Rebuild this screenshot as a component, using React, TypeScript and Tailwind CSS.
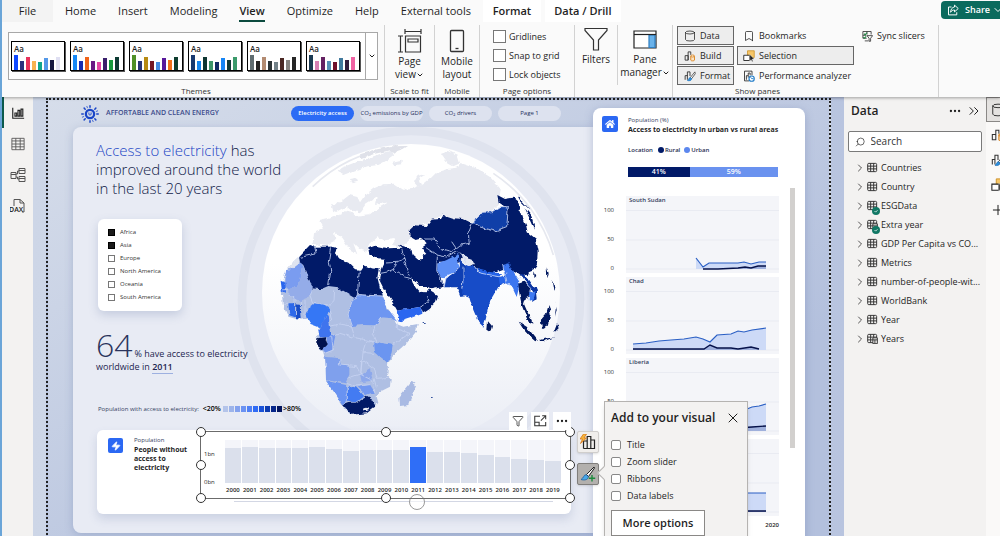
import type { ReactNode } from "react";
import {
  Bookmark,
  ChevronDown,
  ChevronRight,
  ChevronsRight,
  Cylinder,
  Ellipsis,
  Filter,
  Plus,
  Search,
  X,
  Zap,
} from "lucide-react";
import { FaHome } from "react-icons/fa";

const themes = [
  ["#1149ff", "#2b2f7d", "#e8315b", "#f7b250", "#10a58c", "#5498e8", "#12143f", "#dfdff2"],
  ["#1788f5", "#1a2bb0", "#f0641a", "#6a1a85", "#e645a5", "#3a1f6b", "#159a3c", "#0d3b33"],
  ["#4f8f26", "#273576", "#b68a12", "#741722", "#448be0", "#57189b", "#f0701a", "#0e3d2f"],
  ["#17386f", "#1787f0", "#0f3632", "#3c9469", "#112a63", "#1685f5", "#123a37", "#3b9a6b"],
  ["#5f6c70", "#232323", "#b38b71", "#2c3436", "#738289", "#4a2722", "#86827e", "#262626"],
  ["#1b3a52", "#d680b4", "#642162", "#5691b8", "#6e0f2b", "#41799d", "#331d3c", "#f062a3"],
];
const themeHeights = [15, 9, 13, 9, 8, 12, 10, 13];

const tabs = ["Home", "Insert", "Modeling", "View", "Optimize", "Help", "External tools"];

const continents = [
  { name: "Africa", checked: true },
  { name: "Asia", checked: true },
  { name: "Europe", checked: false },
  { name: "North America", checked: false },
  { name: "Oceania", checked: false },
  { name: "South America", checked: false },
];

const legendColors = ["#b4c4ea", "#9db4ea", "#84a2ee", "#6b92f2", "#4f80f5", "#2f6bf5", "#1a52d8", "#0d3bb0", "#06268a", "#021560"];

const withoutElectricity = [35, 36, 35, 35, 35, 36, 34, 32, 33, 33, 33, 36, 31, 31, 30, 28, 26, 24, 23, 22];

const facets = [
  {
    country: "South Sudan",
    urban: "70,62 77,71 83,67 112,67 118,66 125,68 133,66 140,66",
    rural: "77,73 92,73 112,72 119,71 125,72 132,70 140,70",
  },
  {
    country: "Chad",
    urban: "7,67 20,66 33,64 45,63 58,62 70,60 77,62 84,65 91,58 105,57 112,54 118,55 126,53 140,51",
    rural: "7,72 78,72 84,68 91,71 105,71 112,72 125,70 133,72",
  },
  {
    country: "Liberia",
    urban: "84,60 98,57 112,54 121,51 126,49 133,48 140,46",
    rural: "84,72 112,70 126,69 140,68",
  },
  { country: "", urban: "84,54 140,54", rural: "84,72 140,72" },
];

const tables = [
  { name: "Countries" },
  { name: "Country" },
  { name: "ESGData", used: true },
  { name: "Extra year", used: true, calculated: true },
  { name: "GDP Per Capita vs CO..." },
  { name: "Metrics" },
  { name: "number-of-people-wit..." },
  { name: "WorldBank" },
  { name: "Year" },
  { name: "Years", calculated: true },
];

function Tick({ label, className = "", boxClass = "" }: { label: string; className?: string; boxClass?: string }) {
  return (
    <label className={`flex items-center ${className}`}>
      <input type="checkbox" className={`shrink-0 appearance-none border bg-white ${boxClass}`} />
      {label}
    </label>
  );
}

function BuildIcon({ className = "h-3.5 w-3.5" }: { className?: string }) {
  return (
    <svg viewBox="0 0 16 16" className={className} fill="none">
      <path d="M1.5 13.5v-6h4v6zM5.5 13.5v-11h3.500v4" stroke="#333" strokeWidth="1.200" />
      <path d="M9 8v5.500c0 1.300 5 1.300 5 0V8" fill="#fbe3c4" stroke="#d9821b" strokeWidth="1.200" />
      <ellipse cx="11.500" cy="8" rx="2.500" ry="1.300" fill="#fff" stroke="#d9821b" strokeWidth="1.200" />
    </svg>
  );
}

function BrushIcon({ className = "h-3.5 w-3.5" }: { className?: string }) {
  return (
    <svg viewBox="0 0 16 16" className={className} fill="none">
      <path d="M1.500 13V7.500h3V13M4.500 8V2.500H8V8" stroke="#333" strokeWidth="1.200" />
      <path d="M14.500 2.500 8.500 10l1.700 1.500L15 5z" fill="#fff" stroke="#333" />
      <path d="M8.300 10c-2 0-1.500 3-3.800 4 2.500.800 5.500.300 5.700-2.500z" fill="#2b8fdd" stroke="#1b6fb8" strokeWidth=".8" />
    </svg>
  );
}

function SelectionIcon({ className = "h-3.5 w-3.5" }: { className?: string }) {
  return (
    <svg viewBox="0 0 16 16" className={className} fill="none">
      <path d="M6 1h9v9H6z" fill="#f6c667" stroke="#c98d22" />
      <path d="M1 7h8v7H1z" fill="#fff" stroke="#222" strokeWidth="1.200" />
      <path d="m9 6 6 6-3 .3 1.500 2.700-1.300.700L10.700 13 9 15z" fill="#222" stroke="#fff" strokeWidth=".5" />
    </svg>
  );
}

function Group({ caption, className = "", children }: { caption: string; className?: string; children: ReactNode }) {
  return (
    <section className={`flex shrink-0 flex-col border-r border-[#d2d2d2] ${className}`}>
      <div className="flex flex-1">{children}</div>
      <div className="h-3 text-center text-[8px] leading-3 text-[#333]">{caption}</div>
    </section>
  );
}

function Ribbon() {
  return (
    <header className="relative z-20 bg-[#fafafa] shadow-[0_1px_3px_rgba(0,0,0,0.35)]">
      <div className="flex h-[22px] items-start">
        <button className="h-[22px] w-[51px] bg-[#f3f3f3] text-[11px]">File</button>
        <nav className="flex gap-[22px] px-3">
          {tabs.map((tab) => (
            <button
              key={tab}
              className={`h-[22px] text-[11px] ${tab === "View" ? "border-b-2 border-[#0c4a3e] pt-0.5 font-semibold" : ""}`}
            >
              {tab}
            </button>
          ))}
        </nav>
        <button className="h-[22px] w-[58px] bg-white text-[11px] font-semibold">Format</button>
        <button className="ml-1 h-[22px] w-[76px] bg-white text-[11px] font-semibold">Data / Drill</button>
        <button className="mt-px ml-auto flex h-[18px] w-[59px] items-center gap-1.5 overflow-hidden rounded-l bg-[#0b6a5d] pl-1.5 text-[9px] font-semibold text-white">
          <svg viewBox="0 0 16 16" className="h-3 w-3 shrink-0" fill="none" stroke="#fff" strokeWidth="1.300" strokeLinejoin="round">
            <path d="M6 4H2v10.500h11V11" />
            <path d="M10 1.500 15 6l-5 4.500V8C7.500 8 6 9 4.800 11 5 7 7 4.300 10 4z" />
          </svg>
          Share
          <ChevronDown className="-ml-1 h-3 w-3 shrink-0" />
        </button>
      </div>

      <div className="flex h-[75px] pt-[3px]">
        <Group caption="Themes" className="w-[383px] pl-1.5">
          <div className="mt-[7px] mr-1.5 flex h-[48px] flex-1 items-center justify-between border border-[#a8a8a8] bg-white pl-0.5">
            {themes.map((colors, index) => (
              <button key={index} className="h-[30px] w-[54px] border border-black bg-white px-0.5 shadow-[1px_1px_0_#555]">
                <div className="h-[11px] text-left text-[8px] leading-[11px] font-semibold">Aa</div>
                <div className="flex h-4 items-end gap-0.5">
                  {colors.map((color, bar) => (
                    <span key={color} className="w-1" style={{ backgroundColor: color, height: themeHeights[bar] }} />
                  ))}
                </div>
              </button>
            ))}
            <button className="flex h-full w-3 items-center justify-center border-l border-[#a8a8a8]">
              <ChevronDown className="h-2 w-2" strokeWidth={3} />
            </button>
          </div>
        </Group>

        <Group caption="Scale to fit" className="w-[50px]">
          <button className="flex flex-1 flex-col items-center pt-1 text-[10px] leading-[13px]">
            <svg viewBox="0 0 24 24" className="h-6 w-6 shrink-0" fill="none" stroke="#333" strokeWidth="1.200">
              <path d="M7 2.500h16M7 0v5M23 0v5M2.500 7v16M0 7h5M0 23h5" />
              <path d="M7.500 7h15v16h-15zM10 10h10v3H10z" />
            </svg>
            <span className="mt-0.5">Page</span>
            <span className="flex items-center">
              view
              <ChevronDown className="h-2 w-2" strokeWidth={3} />
            </span>
          </button>
        </Group>

        <Group caption="Mobile" className="w-[45px]">
          <button className="flex flex-1 flex-col items-center pt-1 text-[10px] leading-[13px]">
            <svg viewBox="0 0 24 24" className="h-6 w-6 shrink-0" fill="none" stroke="#333" strokeWidth="1.300">
              <rect x="5.500" y="1.500" width="13" height="21" rx="1" />
              <path d="M10.500 19.500h3" />
            </svg>
            <span className="mt-0.5">Mobile</span>
            <span>layout</span>
          </button>
        </Group>

        <Group caption="Page options" className="w-[95px]">
          <div className="flex flex-col gap-[6px] pt-[5px] pl-[13px]">
            {["Gridlines", "Snap to grid", "Lock objects"].map((label) => (
              <Tick key={label} label={label} className="gap-[3px] text-[9px] leading-[13px]" boxClass="h-[13px] w-[13px] border-[#777]" />
            ))}
          </div>
        </Group>

        <section className="flex shrink-0 border-r border-[#d2d2d2]">
          <button className="mb-3 flex w-[43px] flex-col items-center border-r border-[#d2d2d2] pt-0.5 text-[10px] leading-[13px]">
            <svg viewBox="0 0 24 24" className="h-6 w-6" fill="none" stroke="#333" strokeWidth="1.200">
              <path d="M1 1.500h22v2L14.500 13v10h-5V13L1 3.500z" />
            </svg>
            <span className="mt-0.5">Filters</span>
          </button>
          <button className="flex w-[54px] flex-col items-center pt-0.5 text-[10px] leading-[13px]">
            <svg viewBox="0 0 24 24" className="h-6 w-6 shrink-0" fill="none" stroke="#222" strokeWidth="1.200">
              <path d="M1 4h22v17H1z" fill="#fff" />
              <path d="M16 8h6v12.500h-6z" fill="#69b2ea" stroke="#2e7fc2" />
              <path d="M1 7.500h22" />
            </svg>
            <span className="mt-0.5">Pane</span>
            <span className="flex items-center">
              manager
              <ChevronDown className="h-2 w-2" strokeWidth={3} />
            </span>
          </button>
        </section>

        <section className="flex w-[266px] shrink-0 flex-col border-r border-[#d2d2d2] text-[9px]">
          <div className="flex flex-1 items-start gap-[3px] pt-px pl-1">
            <div className="flex w-[57px] flex-col gap-px">
              <button className="flex h-[19px] items-center gap-1 border border-[#666] bg-[#ededed] pl-1.5">
                <Cylinder className="h-3 w-3" strokeWidth={1.5} /> Data
              </button>
              <button className="flex h-[19px] items-center gap-1 border border-[#666] bg-[#ededed] pl-1.5">
                <BuildIcon className="h-3 w-3" /> Build
              </button>
              <button className="flex h-[19px] items-center gap-1 border border-[#666] bg-[#ededed] pl-1.5">
                <BrushIcon className="h-3 w-3" /> Format
              </button>
            </div>
            <div className="flex w-[117px] flex-col gap-px">
              <button className="flex h-[19px] items-center gap-1 pl-1.5">
                <Bookmark className="h-3 w-3" strokeWidth={1.5} /> Bookmarks
              </button>
              <button className="flex h-[19px] items-center gap-1 border border-[#666] bg-[#ededed] pl-[5px]">
                <SelectionIcon className="h-3 w-3" /> Selection
              </button>
              <button className="flex h-[19px] items-center gap-1 pl-1.5 whitespace-nowrap">
                <svg viewBox="0 0 16 16" className="h-3 w-3 shrink-0" fill="none">
                  <path d="M8 14.500H2v-13h10V7M4.500 13V7.500h2M7 10V4h2.500v3" stroke="#333" strokeWidth="1.200" />
                  <circle cx="11.500" cy="11.500" r="3.500" fill="#fff" stroke="#1f7bc8" strokeWidth="1.500" />
                  <path d="m10 9.500 1.500 2H14" stroke="#1f7bc8" strokeWidth="1.200" />
                </svg>
                Performance analyzer
              </button>
            </div>
            <button className="ml-1 flex h-[19px] items-center gap-1 whitespace-nowrap">
              <svg viewBox="0 0 16 16" className="h-3 w-3 shrink-0" fill="none" stroke="#333" strokeWidth="1.100">
                <path d="M2.500 2h11v4M2.500 2v9h5M5 14.500h5M2.500 7H7M8 2v4" />
                <path d="m4 5 1.500 1.500L8 3.500M3 9.500l1.500 1.500L7 8.500" stroke="#2a8a4a" strokeWidth="1.500" />
                <path d="M8 7.500h7.500L12.800 11v4h-2v-4z" fill="#fff" />
              </svg>
              Sync slicers
            </button>
          </div>
          <div className="h-3 pr-24 text-center text-[8px] leading-3 text-[#333]">Show panes</div>
        </section>
      </div>
    </header>
  );
}

function TableIcon({ calculated = false }: { calculated?: boolean }) {
  return (
    <svg viewBox="0 0 16 16" className="h-[11px] w-[11px] shrink-0" fill="none" stroke="#333" strokeWidth="1.400">
      <rect x="1" y="2" width="13" height="12" rx="1.500" />
      <path d="M1 6h13M1 10h13M5.300 2v12M9.700 2v12" />
      {calculated ? <path d="M8.500 7h6.500v8.500H8.500zM8.500 10H15M11.500 10v5" fill="#f3f2f1" /> : null}
    </svg>
  );
}

function ViewRail() {
  const item = "flex h-[31px] w-full items-center justify-center";
  return (
    <nav className="flex w-[31px] shrink-0 flex-col items-center bg-[#f3f2f1]">
      <button aria-label="Report view" className={`${item} border-l-2 border-[#0c5a4b] pr-0.5`}>
        <svg viewBox="0 0 16 16" className="h-3.5 w-3.5" fill="none" stroke="#222" strokeWidth="1.300">
          <path d="M2 2v12h13M4.500 11.500V8h2v3.500zM8 11.500V5h2v6.500zM11.500 11.500v-8h2v8z" />
        </svg>
      </button>
      <button aria-label="Table view" className={item}>
        <svg viewBox="0 0 16 16" className="h-3.5 w-3.5" fill="none" stroke="#555">
          <path d="M1 1.500h14v13H1zM1 4.500h14M1 8h14M1 11.200h14M5.500 1.500v13M10.500 1.500v13" />
        </svg>
      </button>
      <button aria-label="Model view" className={item}>
        <svg viewBox="0 0 16 16" className="h-4 w-4" fill="none" stroke="#555">
          <path d="M1 5.500h5v6H1zM1 7.500h5M9 1.500h6v5H9zM9 3.500h6M9 9.500h6v5H9zM9 11.500h6M6 7H7.500V4H9M6 10h1.500v2H9" />
        </svg>
      </button>
      <button aria-label="DAX query view" className={item}>
        <svg viewBox="0 0 16 16" className="h-4 w-4" fill="none" stroke="#555">
          <path d="M4 8V1.500h6L14 5v9h-2M10 1.500V5h4" />
          <text x="-1" y="14" fontSize="7" fontWeight="600" stroke="none" fill="#222">
            DAX
          </text>
        </svg>
      </button>
    </nav>
  );
}

/* Orthographic globe centred on the Indian Ocean. */
function Globe() {
  return (
    <svg viewBox="-561 96 1560 1218" className="h-[406px] w-[520px] [grid-area:1/1]" fill="none">
      <defs>
        <linearGradient id="sea" x1="0" y1="0" x2="0" y2="1">
          <stop offset="0.400" stopColor="#ffffff" />
          <stop offset="1" stopColor="#eaedf5" />
        </linearGradient>
        <filter id="coast" x="-5%" y="-5%" width="110%" height="110%" colorInterpolationFilters="sRGB">
          <feTurbulence type="fractalNoise" baseFrequency="0.045" numOctaves="3" seed="4" />
          <feDisplacementMap in="SourceGraphic" scale="14" xChannelSelector="R" yChannelSelector="G" />
        </filter>
      </defs>
      <circle cx="453" cy="615" r="507" stroke="#dfe3ee" strokeWidth="26" />
      <circle cx="453" cy="594" r="447" fill="url(#sea)" />
      <path d="M158 275A435 435 0 0 1 400 158M700 235A440 440 0 0 1 880 480" stroke="#e6e8ef" strokeWidth="5" />

      <g filter="url(#coast)">
        <g fill="#e8eaf1">
          <path d="M232 232 246 218 290 202 345 182 375 172 396 166 402 182 385 194 355 210 320 214 280 228 250 240z" />
          <path d="M300 178 345 164 395 154 444 153 430 162 412 168 404 176 392 166 345 176 304 190z" fill="#dfe1e9" />
          <path d="M270 252 288 249 294 260 275 265zM398 200 425 194 424 208 404 211z" />
          <path d="M216 330 245 318 268 300 292 306 300 322 315 300 342 280 370 268 402 266 430 284 458 282 490 268 512 250 530 232 562 222 592 218 604 205 645 218 690 246 722 282 716 330 690 352 640 382 590 372 548 360 515 378 450 405 455 430 425 455 396 450 408 432 372 436 352 424 328 446 320 470 298 462 280 445 292 478 268 462 244 428 222 410 226 438 196 452 158 446 162 412 190 400 178 378 206 372 242 358 266 346 282 350 262 334 230 352z" />
          <path d="M540 178 566 168 592 180 600 205 580 214 556 200z" />
          <path d="M268 345 300 352 318 326 350 306 345 330 382 322 352 340 330 358 286 362z" fill="#ffffff" />
          <path d="M462 262 472 244 500 236 478 250 486 270 474 276z" />
          <path d="M216 338 232 318 246 320 236 345 220 352z" />
        </g>

        <g fill="#011a68">
          <path d="M446 405 461 391 500 393 515 374 540 372 548 359 580 370 610 372 637 385 650 372 690 350 725 347 735 335 716 322 712 300 735 312 758 308 780 326 779 350 798 390 803 412 828 432 836 470 834 505 828 520 808 528 803 540 785 545 765 530 740 520 700 535 660 530 635 515 612 490 595 500 560 500 540 500 505 480 485 458 500 448 485 430 468 434 450 424z" />
          <path d="M772 302 790 320 812 348 800 335 780 316zM795 340 815 365 826 405 815 385zM780 352 792 370 786 372z" />
        </g>

        <g transform="translate(0 465)">
          <path
            fill="#011a68"
            d="M325 -5 345 -13 385 -5 425 -7 410 -18 440 -8 455 -2 458 15 478 32 488 18 510 8 540 20 540 65 552 110 515 118 500 108 480 108 465 95 452 80 458 98 468 115 480 128 497 130 506 116 514 126 534 138 528 158 508 178 490 190 482 170 440 178 412 182 395 152 372 118 357 88 362 62 372 38 372 26 345 24 328 14z"
          />
          <path
            fill="#afbfe3"
            d="M118 18 150 -15 165 -10 215 -10 232 -5 225 8 235 28 265 38 285 58 300 60 310 45 335 55 356 58 352 82 365 130 380 170 400 200 410 222 430 230 473 222 468 245 440 280 405 310 385 335 382 375 392 385 390 410 360 425 350 440 355 458 345 470 320 490 270 492 250 470 225 430 200 395 197 340 190 310 175 290 172 265 180 250 172 225 150 205 120 210 85 200 68 160 65 120 75 70 100 35z"
          />
          <path
            fill="#011a68"
            d="M118 18 150 -15 165 -10 215 -10 232 -5 225 8 235 28 265 38 285 58 300 60 310 45 335 55 356 58 352 82 365 138 295 133 288 145 250 122 235 112 205 108 182 118 158 115 130 45 118 36z"
          />
          <path fill="#dfe4f0" d="M80 56 100 36 116 20 120 38 96 58z" />
          <path fill="#7a9cf0" d="M72 105 78 60 96 58 122 38 128 46 112 110 85 118z" />
          <path fill="#94ace9" d="M128 46 158 114 150 138 120 150 85 135 85 118 112 110z" />
          <path fill="#2a66ee" d="M62 92 76 98 78 128 66 124z" />
          <path fill="#6e96f1" d="M292 134 366 138 382 172 365 200 348 226 310 225 275 228 264 200 275 160zM366 172 388 182 412 212 398 205 364 202z" />
          <path fill="#3577f5" d="M150 163 190 165 208 178 200 200 178 232 152 222 138 200z" />
          <path fill="#3f74ee" d="M205 195 210 230 215 262 178 262 175 238 188 215z" />
          <path fill="#2d69ea" d="M85 160 105 160 105 202 88 196z" />
          <path fill="#184cc6" d="M109 163 122 165 125 208 108 208z" />
          <path fill="#7095ee" d="M200 262 226 258 216 300 196 308 188 298 202 285z" />
          <path fill="#01124f" d="M172 265 195 262 203 284 188 298 172 288z" />
          <path fill="#7fa0ed" d="M196 320 238 325 243 345 268 352 268 374 256 400 198 390z" />
          <path fill="#6993f2" d="M198 392 258 406 262 455 250 466 225 430z" />
          <path fill="#437bf2" d="M260 412 285 412 312 440 290 456 262 455z" />
          <path fill="#7398f0" d="M290 412 330 404 345 428 318 438z" />
          <path fill="#8da8eb" d="M300 372 330 355 338 392 305 396z" />
          <path fill="#6b95f0" d="M342 275 398 285 394 310 382 338 345 306z" />
          <path fill="#021a66" d="M250 466 270 458 290 458 320 440 338 450 345 470 320 490 275 494z" />
          <ellipse cx="318" cy="478" rx="9" ry="5" fill="#e8ecf6" />
          <path fill="#a9bae3" d="M455 395 468 405 458 430 445 465 420 468 418 440 435 420z" />

          <path fill="#2a66f0" d="M410 182 440 178 482 170 488 190 450 205 416 216z" />
          <path fill="#5c8ff6" d="M532 42 560 30 595 12 592 35 600 52 580 70 545 85 532 62z" />
          <path fill="#0f3fb3" d="M598 22 618 45 630 58 612 90 608 118 620 135 600 138 590 112 552 112 558 85 580 72 600 52z" />
          <path fill="#174cc8" d="M618 46 640 48 655 68 715 80 745 72 740 100 715 110 705 130 685 165 678 205 670 230 655 215 640 180 628 140 606 132 612 95z" />
          <path fill="#e4e8f2" d="M604 14 638 26 646 42 625 48 612 38z" />
          <path fill="#3c76f0" d="M728 45 748 40 762 70 780 98 770 138 758 112 738 98z" />
          <path fill="#2563e8" d="M650 56 690 66 720 70 716 80 660 72zM716 82 738 78 736 98 720 108z" />
          <path fill="#01185f" d="M775 102 795 95 812 112 810 135 798 142 792 162 804 190 818 210 820 222 800 204 786 168 778 130z" />
          <path fill="#0b35a2" d="M782 72 800 80 815 102 830 120 833 145 816 156 822 130 802 100z" />
          <path fill="#3f7af2" d="M808 125 826 128 820 152 806 148z" />
          <path fill="#01185f" d="M776 215 800 230 830 268 828 276 808 258 790 238zM832 272 852 266 884 262 850 274zM866 165 872 190 864 225 846 234 842 210 858 192zM684 214 696 228 692 242 682 236z" />
          <path fill="#01185f" d="M860 52 866 70 862 82zM878 90 886 110 884 130zM884 150 890 180 884 200 888 172zM820 64 826 78 820 84zM892 220 896 235 880 250z" />
          <path fill="#35549f" d="M488 216h9v3h-9zM516 438h5v3h-5z" />
        </g>

        <path fill="#103fa8" d="M640 382 668 352 700 350 722 335 745 335 742 375 740 395 705 408 660 396z" />
        <path fill="#ffffff" d="M455 434 478 428 494 440 482 452 494 468 488 492 472 492 458 470z" />
        <g stroke="#c6d2f2" strokeWidth="2.500">
          <path d="M640 382 668 352 700 350 722 335 745 335 742 375 740 395 705 408 660 396zM637 385 625 415 628 445 600 450 575 470 545 462 520 432 495 432M498 458 530 480 560 486 590 470 605 480 620 500M575 440 590 462M735 335 745 345" />
          <g transform="translate(0 465)">
            <path d="M165 -10 168 12 120 22M215 -8 208 35 212 65 206 105M298 60 292 134 288 145M292 134 366 138M425 -5 432 28 412 34 380 36M432 28 448 80M408 36 400 58 382 66 362 70M400 58 440 85 456 90M532 20 530 62 552 110M500 135 505 155 482 170" />
            <path d="M158 114 150 140 158 160 205 168 222 152 224 118M278 150 264 195 275 228 240 222 210 228M208 178 215 215M210 262 240 250 280 262 310 268 345 276M275 228 285 262M345 226 340 250 350 275M366 200 348 226M412 215 408 235 450 250 440 256 400 284M215 262 220 300 190 312M240 325 238 345 290 350 302 372 310 300 318 275 340 276M310 308 345 310M302 372 305 330 345 360 350 385 385 382M262 385 300 372 338 392 345 428M258 400 285 408 330 404M345 385 352 412M262 410 262 455M85 135 105 140 105 160M122 150 122 165M135 150 135 205M84 118 68 120M85 160 70 160" />
            <path d="M612 50 612 90 608 118M600 52 580 72 558 85 552 112M640 48 655 68 715 80 745 72M728 45 738 98M780 98 782 72M795 95 812 112 808 125" />
          </g>
        </g>
      </g>
    </svg>
  );
}

function Handle({ className }: { className: string }) {
  return <span className={`absolute h-[10px] w-[10px] -translate-x-1/2 -translate-y-1/2 rounded-full border border-[#333] bg-white ${className}`} />;
}

function AddToVisual() {
  return (
    <aside className="absolute -top-[29px] left-[507px] h-[160px] w-[144px] border border-[#b5b3b1] bg-[#f3f2f1] px-1.5 shadow-md">
      <span className="absolute top-[66px] -left-[6px] h-[10px] w-[10px] rotate-45 border-b border-l border-[#b5b3b1] bg-[#f3f2f1]" />
      <div className="flex h-8 items-center justify-between">
        <h2 className="text-[12px] font-semibold whitespace-nowrap">Add to your visual</h2>
        <button aria-label="Close">
          <X className="h-4 w-4" strokeWidth={1.5} />
        </button>
      </div>
      <div className="mt-1 flex flex-col gap-1">
        {["Title", "Zoom slider", "Ribbons", "Data labels"].map((label) => (
          <Tick key={label} label={label} className="gap-1.5 text-[9px] leading-[13px]" boxClass="h-[10px] w-[10px] rounded-xs border-[#888]" />
        ))}
      </div>
      <button className="mt-2 h-[26px] w-[94px] border border-[#8a8886] bg-white text-[11px] font-semibold">More options</button>
    </aside>
  );
}

function WithoutElectricityCard() {
  const tool = "flex h-[18px] w-[18px] items-center justify-center bg-white";
  return (
    <div className="relative z-10 flex h-[84px] w-[474px] rounded-md bg-white shadow-[0_5px_10px_rgba(90,110,160,0.2)]">
      <span className="mt-2 ml-[11px] flex h-[15px] w-[15px] shrink-0 items-center justify-center rounded-xs bg-[#2b68f3]">
        <Zap className="h-2.5 w-2.5 fill-white text-white" />
      </span>
      <div className="mt-1.5 ml-[11px] w-[66px] shrink-0 leading-[9px]">
        <div className="text-[6px] text-[#333d60]">Population</div>
        <h2 className="w-[60px] text-[7px] font-bold">People without access to electricity</h2>
      </div>
      <div className="mt-px min-w-0 flex-1">
        <div className="relative flex h-[68px] border border-[#6b6b6b]">
          <div className="flex w-6 flex-col justify-between pt-[17px] pb-[11px] pl-[3px] text-[6px] leading-[10px]">
            <span>1bn</span>
            <span>0bn</span>
          </div>
          <div className="flex flex-1 gap-px pt-2 pr-[9px]">
            {withoutElectricity.map((height, index) => (
              <div key={index} className="min-w-0 flex-1">
                <div className="flex h-[43px] items-end bg-[#f4f5fa]">
                  <div className={`w-full ${index === 11 ? "bg-[#2f6ef7]" : "bg-[#dbe0ec]"}`} style={{ height }} />
                </div>
                <div className="flex justify-center pt-[3px] text-[6px] leading-[8px] font-semibold">{2000 + index}</div>
              </div>
            ))}
          </div>
          <Handle className="top-0 left-0" />
          <Handle className="top-0 left-1/2" />
          <Handle className="top-0 left-full" />
          <Handle className="top-1/2 left-0" />
          <Handle className="top-1/2 left-full" />
          <Handle className="top-full left-0" />
          <Handle className="top-full left-1/2" />
          <Handle className="top-full left-full" />
        </div>
        <input
          type="range"
          aria-label="Year"
          min={2000}
          max={2019}
          defaultValue={2011}
          className="mx-[34px] -mt-1.5 block h-4 w-[319px] appearance-none bg-transparent [&::-webkit-slider-runnable-track]:h-px [&::-webkit-slider-runnable-track]:bg-[#d3d7e4] [&::-webkit-slider-thumb]:-mt-[7px] [&::-webkit-slider-thumb]:h-4 [&::-webkit-slider-thumb]:w-4 [&::-webkit-slider-thumb]:appearance-none [&::-webkit-slider-thumb]:rounded-full [&::-webkit-slider-thumb]:border [&::-webkit-slider-thumb]:border-[#999] [&::-webkit-slider-thumb]:bg-white/60"
        />
      </div>

      <div className="absolute right-0 bottom-full flex gap-1">
        <button aria-label="Filters" className={tool}>
          <Filter className="h-3 w-3" strokeWidth={1.5} />
        </button>
        <button aria-label="Focus mode" className={tool}>
          <svg viewBox="0 0 16 16" className="h-3.5 w-3.5" fill="none" stroke="#333" strokeWidth="1.200">
            <path d="M8 2.500H2v11h12.500V9M2 9.500h5v4M9 7.500l5.500-5.500M10.500 2h4v4" />
          </svg>
        </button>
        <button aria-label="More options" className={tool}>
          <Ellipsis className="h-3.5 w-3.5" />
        </button>
      </div>

      <div className="absolute top-px left-[480px] flex flex-col gap-[10px]">
        <button aria-label="Build a visual" className="flex h-[22px] w-[22px] items-center justify-center rounded-xs border border-[#d0cecc] bg-[#f0eeec] shadow">
          <svg viewBox="0 0 16 16" className="h-4 w-4" fill="none">
            <path d="M3.500 14.500V7h3.700v7.500M7.200 14.500v-12h3.600v12M10.800 6h3.700v8.500H3.500" stroke="#222" strokeWidth="1.200" />
            <path d="M3.500 0 0 5h2.500L.5 9.500 6.500 4H4l2.500-4z" fill="#f5b73c" stroke="#d8761a" strokeWidth=".8" />
          </svg>
        </button>
        <button aria-label="Format a visual" className="flex h-[22px] w-[22px] items-center justify-center rounded-xs border border-[#807e7c] bg-[#b3b0ad] shadow">
          <svg viewBox="0 0 16 16" className="h-4 w-4" fill="none">
            <path d="M14 1 6.500 8.500l2 2L14.500 2z" fill="#fff" stroke="#222" />
            <path d="M6.300 8.700C3.500 8.500 4 12 1 13.500c3 1 7.300.500 7.300-2.800z" fill="#4aa8ea" stroke="#1b5f9e" strokeWidth=".8" />
            <path d="M12 9v6.500M8.800 12.300h6.400" stroke="#1d8a3c" strokeWidth="1.400" />
          </svg>
        </button>
      </div>
      <AddToVisual />
    </div>
  );
}

function AccessPanel() {
  return (
    <div className="grid h-[406px] rounded-l-lg bg-[#e8ebf4] shadow-[0_2px_8px_rgba(90,110,160,0.3)]">
      <Globe />
      <div className="flex flex-col items-start pt-[14px] pl-6 [grid-area:1/1]">
        <h1 className="-ml-px text-[15px] leading-[19px] font-light text-[#101a48]">
          <span className="text-[#1b45c4]">Access to electricity</span> has
          <br />
          improved around the world
          <br />
          in the last 20 years
        </h1>

        <div className="mt-[21px] ml-px flex h-[92px] w-[84px] flex-col justify-center rounded-md bg-white pl-2.5 shadow-[0_4px_10px_rgba(90,110,160,0.25)]">
          {continents.map((item) => (
            <label key={item.name} className="flex h-[13px] items-center gap-[5px] text-[6px] text-[#333]">
              <input
                type="checkbox"
                defaultChecked={item.checked}
                className="h-[7px] w-[7px] appearance-none border border-[#777] bg-white checked:border-black checked:bg-[#1a1a1a]"
              />
              {item.name}
            </label>
          ))}
        </div>

        <div className="-ml-px mt-[17px] text-[9px] text-[#1d2650]">
          <p className="flex h-8 items-baseline gap-0.5">
            <span className="text-[32px] leading-[34px] font-light text-[#2a335c]">64</span>% have access to electricity
          </p>
          <p className="leading-[14px]">
            worldwide in <span className="border-b border-[#9db0e0] font-semibold">2011</span>
          </p>
        </div>

        <div className="mt-[30px] ml-px flex h-[10px] items-center text-[6px] text-[#333d60]">
          Population with access to electricity:
          <b className="mr-0.5 ml-1 text-[7px] font-semibold text-black">&lt;20%</b>
          <span className="flex gap-px">
            {legendColors.map((color) => (
              <i key={color} className="h-1.5 w-[5px]" style={{ backgroundColor: color }} />
            ))}
          </span>
          <b className="ml-px text-[7px] font-semibold text-black">&gt;80%</b>
        </div>

        <div className="mt-auto mb-[19px]">
          <WithoutElectricityCard />
        </div>
      </div>
    </div>
  );
}

function Facet({ country, urban, rural }: { country: string; urban: string; rural: string }) {
  const baseline = (points: string) => {
    const first = points.split(",")[0];
    const last = points.split(" ").pop()!.split(",")[0];
    return `${first},73 ${points} ${last},73`;
  };
  return (
    <div className="flex h-[77px] gap-3">
      <div className="flex w-[21px] flex-col gap-[19px] pt-[9px] text-right text-[6px] leading-[10px] text-[#333]">
        <span>100</span>
        <span>50</span>
        <span>0</span>
      </div>
      <svg viewBox="0 0 153 77" className="h-[77px] w-[153px] bg-[#f4f5f9]" fill="none">
        <path d="M0 14.500h153M0 44h153M0 73h153" stroke="#e9ebf2" />
        <polygon points={baseline(urban)} fill="#cddaf7" />
        <polygon points={baseline(rural)} fill="#9fb0dc" />
        <polyline points={urban} stroke="#2a5fc4" strokeWidth="1.200" />
        <polyline points={rural} stroke="#06124a" strokeWidth="1.400" />
        <text x="3" y="6" fontSize="6" fontWeight="600" fill="#333d60">
          {country}
        </text>
      </svg>
    </div>
  );
}

function UrbanRuralCard() {
  return (
    <div className="mt-2 mr-6 h-[460px] w-[212px] shrink-0 rounded-t-lg bg-white pt-2 shadow-[0_2px_8px_rgba(90,110,160,0.35)]">
      <div className="flex gap-[10px] pl-[9px]">
        <span className="flex h-4 w-4 items-center justify-center rounded-xs bg-[#2b68f3]">
          <FaHome className="h-2.5 w-2.5 text-white" />
        </span>
        <div className="leading-[9px]">
          <div className="text-[6px] text-[#333d60]">Population (%)</div>
          <h2 className="text-[7px] font-bold">Access to electricity in urban vs rural areas</h2>
        </div>
      </div>
      <div className="mt-[11px] ml-[35px] flex h-[10px] items-center text-[6px] font-semibold text-[#252d50]">
        Location
        <i className="mr-px ml-[5px] h-1.5 w-1.5 rounded-full bg-[#011a68]" />
        Rural
        <i className="mr-px ml-1 h-1.5 w-1.5 rounded-full bg-[#5c87ee]" />
        Urban
      </div>
      <div className="mt-[12px] ml-[35px] flex h-[10px] w-[150px] text-center text-[7px] leading-[10px] font-semibold text-white">
        <span className="w-[41%] bg-[#011a68]">41%</span>
        <span className="w-[59%] bg-[#6a92ef]">59%</span>
      </div>
      <div className="mt-[11px] flex gap-[11px]">
        <div className="mt-2 flex w-[186px] flex-col gap-1">
          {facets.map((facet) => (
            <Facet key={facet.country} {...facet} />
          ))}
          <div className="text-right text-[6px] leading-[10px] font-semibold">2020</div>
        </div>
        <span className="h-[260px] w-[5px] bg-[#d2d0ce]" />
      </div>
    </div>
  );
}

function ReportCanvas() {
  const pill = "flex h-[15px] w-[63px] items-center justify-center rounded-full whitespace-nowrap text-[6px]";
  return (
    <main className="min-w-0 flex-1 overflow-hidden bg-linear-to-r from-[#cdd6e7] to-[#b8c4df] px-[13px] pt-px">
      <div className="flex h-[460px] border-2 border-dotted border-[#222] bg-linear-to-br from-[#d6ddea] to-[#b3c0dd] to-75%">
        <div className="min-w-0 flex-1 pl-[25px]">
          <div className="flex h-[27px] items-center">
            <svg viewBox="0 0 24 24" className="ml-2 h-[18px] w-[18px]" fill="none" stroke="#1a45c8" strokeLinecap="round">
              <circle cx="12" cy="12" r="5.500" strokeWidth="3" />
              <path d="M10.500 10.500v1.500a1.500 1.500 0 0 0 3 0v-1.500" strokeWidth="1.200" />
              <path d="M12 1v2M12 21v2M1 12h2M21 12h2M4.200 4.200l1.400 1.400M18.400 18.400l1.400 1.400M4.200 19.800l1.400-1.400M18.400 5.600l1.400-1.400" strokeWidth="2" />
              <path d="M7.800 1.800l.8 1.900M15.400 20.300l.8 1.900M1.800 16.200l1.900-.8M20.300 8.600l1.900-.8" strokeWidth="1" />
            </svg>
            <h2 className="ml-[7px] text-[7px] font-semibold whitespace-nowrap text-[#3c4c8c]">AFFORTABLE AND CLEAN ENERGY</h2>
            <nav className="mr-8 ml-auto flex gap-1.5 text-[#27305c]">
              <button className={`${pill} bg-[#2b6bf5] font-semibold text-white`}>Electricity access</button>
              <button className={`${pill} bg-[#dde2ef]`}>CO₂ emissions by GDP</button>
              <button className={`${pill} bg-[#dde2ef]`}>CO₂ drivers</button>
              <button className={`${pill} bg-[#dde2ef]`}>Page 1</button>
            </nav>
          </div>
          <AccessPanel />
        </div>
        <UrbanRuralCard />
      </div>
    </main>
  );
}

function DataPane() {
  return (
    <aside className="w-[142px] shrink-0 bg-[#f3f2f1] pl-1">
      <div className="flex h-7 items-center pl-[3px]">
        <h2 className="flex-1 text-[12px] font-semibold">Data</h2>
        <Ellipsis className="mr-1 h-3.5 w-3.5" />
        <ChevronsRight className="mr-1 h-4 w-4" strokeWidth={1.5} />
      </div>
      <label className="mt-[6px] mr-1 flex h-[21px] items-center gap-[5px] rounded-xs border border-[#7a7a7a] bg-white pl-1.5">
        <Search className="h-3 w-3 -scale-x-100" strokeWidth={1.5} />
        <input aria-label="Search" placeholder="Search" className="w-full min-w-0 text-[10px] outline-none placeholder:text-[#333]" />
      </label>
      <ul className="mt-[6px]">
        {tables.map((table) => (
          <li key={table.name} className="relative flex h-[19px] items-center pl-1.5 text-[9px] whitespace-nowrap">
            <ChevronRight className="mr-px h-3 w-3" strokeWidth={1.5} />
            <TableIcon calculated={table.calculated} />
            <span className="ml-[3px]">{table.name}</span>
            {table.used ? (
              <span className="absolute bottom-0 left-6 flex h-2 w-2 items-center justify-center rounded-full bg-[#117865]">
                <svg viewBox="0 0 8 8" className="h-1.5 w-1.5" fill="none" stroke="#fff">
                  <path d="m2 4 1.500 1.500L6 3" />
                </svg>
              </span>
            ) : null}
          </li>
        ))}
      </ul>
    </aside>
  );
}

function PaneSwitcher() {
  const item = "flex h-[25px] w-6 items-center justify-center";
  return (
    <nav className="w-[14px] shrink-0 overflow-hidden bg-[#faf9f8]">
      <button aria-label="Data" className={`${item} border border-[#8a8886] bg-[#e4e2e0]`}>
        <Cylinder className="h-3.5 w-3.5" strokeWidth={1.5} />
      </button>
      <button aria-label="Build" className={item}>
        <BuildIcon />
      </button>
      <button aria-label="Format" className={item}>
        <BrushIcon />
      </button>
      <button aria-label="Selection" className={item}>
        <SelectionIcon />
      </button>
      <button aria-label="Add" className={item}>
        <Plus className="h-4 w-4" strokeWidth={1.5} />
      </button>
    </nav>
  );
}

export default function App() {
  return (
    <div className="flex h-screen flex-col overflow-hidden border-l-2 border-[#6aa5d8] font-['Open_Sans',sans-serif] text-[#1f1f1f]">
      <Ribbon />
      <div className="flex min-h-0 flex-1">
        <ViewRail />
        <ReportCanvas />
        <DataPane />
        <PaneSwitcher />
      </div>
    </div>
  );
}
